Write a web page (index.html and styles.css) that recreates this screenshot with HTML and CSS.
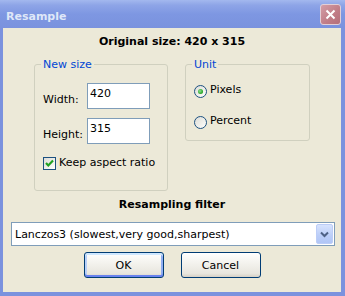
FILE: index.html
```html
<!DOCTYPE html>
<html lang="en">
<head>
    <meta charset="UTF-8">
    <meta name="viewport" content="width=device-width, initial-scale=1.0">
    <title>Resample</title>
    <link rel="stylesheet" href="styles.css">
</head>
<body>

    <div class="window">
        <div class="titlebar">
            <span class="title">Resample</span>
            <span class="close-btn">
                <svg width="11" height="11" viewBox="0 0 11 11">
                    <path d="M1.5 1.5 L9.5 9.5 M9.5 1.5 L1.5 9.5" stroke="#fff" stroke-width="2" fill="none"/>
                </svg>
            </span>
        </div>

        <div class="client">
            <h2 class="caption">Original size: 420 x 315</h2>

            <div class="groups">
                <fieldset class="group group-size">
                    <legend>New size</legend>
                    <div class="size-grid">
                        <label class="field-label" for="w">Width:</label>
                        <input class="text-input" id="w" type="text" value="420">
                        <label class="field-label" for="h">Height:</label>
                        <input class="text-input" id="h" type="text" value="315">
                    </div>
                    <div class="check-row">
                        <span class="checkbox">
                            <svg width="11" height="11" viewBox="0 0 11 11">
                                <path d="M2 5 L4.3 7.4 L9 2.6" stroke="#21a121" stroke-width="2.2" fill="none"/>
                            </svg>
                        </span>
                        <span>Keep aspect ratio</span>
                    </div>
                </fieldset>

                <fieldset class="group group-unit">
                    <legend>Unit</legend>
                    <div class="radio-row">
                        <span class="radio checked"></span>
                        <span>Pixels</span>
                    </div>
                    <div class="radio-row">
                        <span class="radio"></span>
                        <span>Percent</span>
                    </div>
                </fieldset>
            </div>

            <h2 class="caption caption-filter">Resampling filter</h2>

            <div class="combo">
                <span class="combo-text">Lanczos3 (slowest,very good,sharpest)</span>
                <span class="combo-btn">
                    <svg width="9" height="7" viewBox="0 0 9 7">
                        <path d="M1 1.5 L4.5 5 L8 1.5" stroke="#4d6185" stroke-width="2" fill="none"/>
                    </svg>
                </span>
            </div>

            <div class="buttons">
                <button class="btn btn-default">OK</button>
                <button class="btn">Cancel</button>
            </div>
        </div>
    </div>

</body>
</html>
```

FILE: styles.css
```css
html, body {
    margin: 0;
    padding: 0;
}

body {
    font-family: "DejaVu Sans", sans-serif;
    font-size: 11px;
    line-height: 13px;
    color: #000;
}

.window {
    width: 345px;
    height: 296px;
    background-color: #7b92de;
    display: flex;
    flex-direction: column;
}

.titlebar {
    height: 28px;
    display: flex;
    justify-content: space-between;
    align-items: flex-start;
    background: linear-gradient(#a3b8ee 0%, #8ea5e7 18%, #7e97e2 50%, #7a92de 100%);
    padding-left: 6px;
    padding-right: 4px;
}

.title {
    font-weight: bold;
    color: #dfe7f8;
    margin-top: 10px;
}

.close-btn {
    width: 21px;
    height: 21px;
    margin-top: 4px;
    box-sizing: border-box;
    border: 1px solid #e2cfd6;
    border-radius: 3px;
    background: linear-gradient(135deg, #d39ea6, #c07c86 60%, #b46f7a);
    display: flex;
    justify-content: center;
    align-items: center;
}

.client {
    flex: 1;
    background-color: #ece9d8;
    margin: 0 4px 4px 3px;
    padding-top: 7px;
}

.caption {
    margin: 0;
    font-size: 11px;
    font-weight: bold;
    text-align: center;
}

.groups {
    display: flex;
    justify-content: center;
    align-items: flex-start;
    gap: 17px;
    margin-top: 10px;
}

.group {
    margin: 0;
    min-width: 0;
    box-sizing: border-box;
    border: 1px solid #d0d0bf;
    border-radius: 3px;
    padding: 12px 0 0 8px;
}

.group legend {
    color: #0046d5;
    padding: 0 2px;
    margin-left: -2px;
}

.group-size {
    width: 134px;
    padding-bottom: 20px;
}

.group-unit {
    width: 125px;
    padding-bottom: 11px;
}

.size-grid {
    display: grid;
    grid-template-columns: 44px 63px;
    row-gap: 9px;
}

.field-label {
    align-self: end;
    padding-bottom: 3px;
}

.text-input {
    width: 63px;
    height: 26px;
    box-sizing: border-box;
    border: 1px solid #7f9db9;
    padding: 0 2px 5px 2px;
    margin: 0;
    font-family: "DejaVu Sans", sans-serif;
    font-size: 11px;
    background: #fff;
    color: #000;
    outline: none;
}

.check-row {
    display: flex;
    align-items: flex-start;
    gap: 3px;
    margin-top: 12px;
}

.checkbox {
    width: 13px;
    height: 13px;
    margin-top: 1px;
    box-sizing: border-box;
    border: 1px solid #1c5180;
    background: linear-gradient(135deg, #dcdcd7, #f4f4f0 70%, #fff);
    display: flex;
    justify-content: center;
    align-items: center;
}

.radio-row {
    display: flex;
    align-items: flex-start;
    gap: 3px;
}

.radio-row + .radio-row {
    margin-top: 16px;
}

.radio {
    width: 13px;
    height: 13px;
    margin-top: 2px;
    box-sizing: border-box;
    border: 1px solid #1c5180;
    border-radius: 50%;
    background: linear-gradient(135deg, #dcdcd7, #f4f4f0 70%, #fff);
    display: flex;
    justify-content: center;
    align-items: center;
}

.radio.checked::after {
    content: "";
    width: 5px;
    height: 5px;
    border-radius: 50%;
    background: radial-gradient(circle at 40% 40%, #8ee08e, #21a121 70%);
}

.caption-filter {
    margin-top: 7px;
}

.combo {
    width: 324px;
    height: 24px;
    box-sizing: border-box;
    margin: 11px 0 0 8px;
    border: 1px solid #7f9db9;
    background: #fff;
    display: flex;
    align-items: center;
    justify-content: space-between;
    padding: 1px;
}

.combo-text {
    padding-left: 2px;
}

.combo-btn {
    width: 17px;
    height: 20px;
    box-sizing: border-box;
    border: 1px solid #bccdf7;
    border-radius: 2px;
    background: linear-gradient(#d7e3fd, #bacdf8 60%, #b1c6f6);
    display: flex;
    justify-content: center;
    align-items: center;
}

.buttons {
    display: flex;
    justify-content: center;
    gap: 17px;
    margin-top: 6px;
}

.btn {
    width: 80px;
    height: 26px;
    box-sizing: border-box;
    border: 1px solid #003c74;
    border-radius: 3px;
    background: linear-gradient(#ffffff, #f4f3ee 40%, #e8e6de 85%, #d6d0c5);
    font-family: "DejaVu Sans", sans-serif;
    font-size: 11px;
    color: #000;
    padding: 0;
    cursor: pointer;
}

.btn-default {
    box-shadow: inset 0 2px 0 #cee7ff, inset 0 -2px 0 #6982ee, inset 2px 0 0 #b8d0f8, inset -2px 0 0 #90aef2;
}
```
